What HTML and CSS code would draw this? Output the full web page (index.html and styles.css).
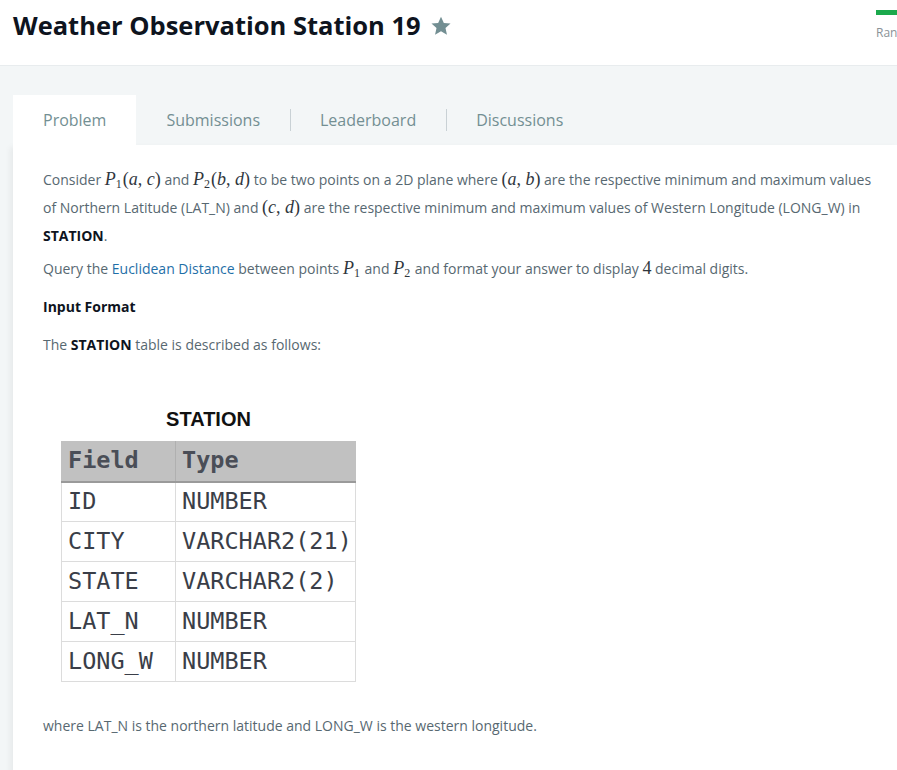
FILE: index.html
```html
<!DOCTYPE html>
<html>
<head>
<meta charset="utf-8">
<link rel="stylesheet" href="styles.css">
</head>
<body>
<header class="top">
  <div class="crumbs">Prepare &gt; SQL &gt; Aggregation &gt;</div>
  <div class="title-row">
    <h1 class="title">Weather Observation Station 19</h1>
    <svg class="star" width="22" height="22" viewBox="0 0 24 24"><path d="M12 1.8l3.1 6.9 7.3.7-5.5 4.9 1.6 7.3L12 17.8 5.5 21.6l1.6-7.3L1.6 9.4l7.3-.7z" fill="#738f93"/></svg>
  </div>
  <div class="rank">
    <div class="rank-bar"></div>
    <div class="rank-text">Ran</div>
  </div>
</header>
<main class="stage">
  <nav class="tabs">
    <div class="tab active">Problem</div>
    <div class="tab">Submissions</div>
    <div class="sep"></div>
    <div class="tab">Leaderboard</div>
    <div class="sep"></div>
    <div class="tab">Discussions</div>
  </nav>
  <section class="panel">
    <p class="first">Consider <span class="math"><i>P</i><sub>1</sub><span class="r">(</span><i>a</i><span class="r">, </span><i>c</i><span class="r">)</span></span> and <span class="math"><i>P</i><sub>2</sub><span class="r">(</span><i>b</i><span class="r">, </span><i>d</i><span class="r">)</span></span> to be two points on a 2D plane where <span class="math"><span class="r">(</span><i>a</i><span class="r">, </span><i>b</i><span class="r">)</span></span> are the respective minimum and maximum values of Northern Latitude (LAT_N) and <span class="math"><span class="r">(</span><i>c</i><span class="r">, </span><i>d</i><span class="r">)</span></span> are the respective minimum and maximum values of Western Longitude (LONG_W) in <b>STATION</b>.</p>
    <p>Query the <a class="link">Euclidean Distance</a> between points <span class="math"><i>P</i><sub>1</sub></span> and <span class="math"><i>P</i><sub>2</sub></span> and format your answer to display <span class="math"><span class="r">4</span></span> decimal digits.</p>
    <p><b>Input Format</b></p>
    <p>The <b>STATION</b> table is described as follows:</p>
    <div class="figure">
      <div class="caption">STATION</div>
      <table class="schema">
        <thead><tr><th class="c1">Field</th><th>Type</th></tr></thead>
        <tbody>
          <tr><td class="c1">ID</td><td>NUMBER</td></tr>
          <tr><td class="c1">CITY</td><td>VARCHAR2(21)</td></tr>
          <tr><td class="c1">STATE</td><td>VARCHAR2(2)</td></tr>
          <tr><td class="c1">LAT_N</td><td>NUMBER</td></tr>
          <tr><td class="c1">LONG_W</td><td>NUMBER</td></tr>
        </tbody>
      </table>
    </div>
    <p class="last">where LAT_N is the northern latitude and LONG_W is the western longitude.</p>
  </section>
</main>
</body>
</html>
```
FILE: styles.css
```css
html, body {
  margin: 0;
  padding: 0;
  background: #f3f6f7;
  font-family: "Open Sans", "Liberation Sans", sans-serif;
  overflow: hidden;
}
.top {
  position: relative;
  background: #fff;
  height: 65px;
  border-bottom: 1px solid #e8ecee;
  padding-left: 13px;
}
.crumbs {
  font-size: 13px;
  color: #b5bcc1;
  height: 4px;
  line-height: 4px;
  overflow: hidden;
  padding-left: 17px;
  position: relative;
  top: -8px;
}
.title-row {
  display: flex;
  align-items: center;
  gap: 9px;
  margin-top: 6px;
}
.title {
  margin: 0;
  font-size: 25.5px;
  font-weight: 700;
  color: #0e141e;
  line-height: 30px;
}
.star { margin-top: 1px; }
.rank {
  position: absolute;
  right: 0;
  top: 10px;
  width: 21px;
  overflow: hidden;
}
.rank-bar {
  height: 5px;
  background: #1ba94c;
}
.rank-text {
  font-size: 12px;
  color: #8a9297;
  margin-top: 9px;
  white-space: nowrap;
}
.stage {
  padding: 29px 0 0 13px;
}
.tabs {
  display: flex;
  align-items: center;
  height: 50px;
}
.tab {
  font-size: 16px;
  color: #738f93;
  padding: 0 30px;
  height: 50px;
  line-height: 50px;
}
.tab.active {
  background: #fff;
}
.sep {
  width: 1px;
  height: 22px;
  background: #c9d1d5;
  margin-right: -1px;
}
.panel {
  background: #fff;
  padding: 21px 0 40px 30px;
  box-shadow: -3px 2px 6px rgba(0,0,0,0.05);
  min-height: 700px;
}
.panel p {
  margin: 0 0 10px 0;
  max-width: 834px;
  font-size: 14px;
  line-height: 28px;
  color: #576871;
}
.panel p.first { margin-bottom: 5px; }
.panel b { color: #0e141e; font-weight: 700; }
.link { color: #1f6fa8; }
.math {
  font-family: "Liberation Serif", "DejaVu Serif", serif;
  font-size: 18px;
  line-height: 1;
  color: #2f363d;
  white-space: nowrap;
}
.math i {
  font-style: italic;
}
.math sub {
  font-size: 12px;
  line-height: 0;
  vertical-align: -3px;
  margin-right: 1px;
  font-style: normal;
}
.figure {
  margin: 47px 0 0 18px;
  width: 295px;
}
.caption {
  text-align: center;
  font-family: "Liberation Sans", sans-serif;
  font-weight: 700;
  font-size: 20px;
  color: #111;
  height: 35px;
  line-height: 26px;
}
.schema {
  border-collapse: collapse;
  width: 295px;
  font-family: "DejaVu Sans Mono", monospace;
  font-size: 23.5px;
  color: #3a3e48;
  margin-bottom: 30px;
}
.schema th, .schema td {
  height: 40px;
  padding: 0 0 2px 6px;
  text-align: left;
  border: 1px solid #dcdcdc;
  line-height: 30px;
  font-weight: 400;
  box-sizing: border-box;
}
.schema th {
  background: #c1c1c1;
  font-weight: 700;
  color: #4a4e57;
  border-color: #c1c1c1;
  border-bottom: 2px solid #9a9a9a;
}
.schema th.c1 { border-right: 1px solid #b0b0b0; }
.schema .c1 { width: 114px; }
```
